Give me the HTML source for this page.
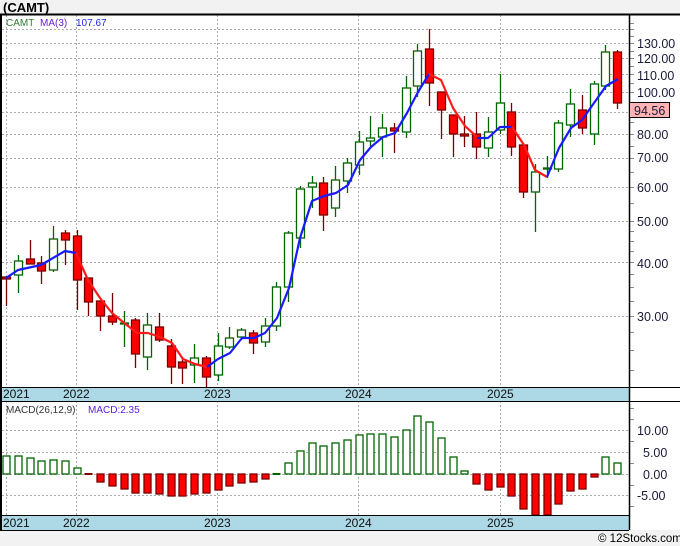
<!DOCTYPE html>
<html><head><meta charset="utf-8"><style>
html,body{margin:0;padding:0;background:#f2f2f2;width:680px;height:546px;overflow:hidden;font-family:"Liberation Sans","DejaVu Sans",sans-serif}
svg{position:absolute;left:0;top:0}
</style></head><body>
<svg id="s" width="680" height="546" xmlns="http://www.w3.org/2000/svg" font-family="Liberation Sans, DejaVu Sans, sans-serif">
<rect x="0" y="14" width="680" height="516" fill="#fff"/>
<g id="grid" stroke="#aaa" stroke-dasharray="2,2" stroke-width="1"></g>
<rect x="0" y="387" width="629" height="14" fill="#add8e6"/>
<rect x="0" y="516" width="629" height="14" fill="#add8e6"/>
<g id="ticks" stroke="#888"></g>
<g id="cd"></g>
<g id="ma" fill="none" stroke-width="2.2" stroke-linejoin="round"></g>
<g id="mb"></g>
<line x1="0" y1="14.5" x2="680" y2="14.5" stroke="#000" stroke-width="2"/>
<line x1="1" y1="14" x2="1" y2="530" stroke="#000" stroke-width="2"/>
<line x1="629.5" y1="14" x2="629.5" y2="530" stroke="#000" stroke-width="1.5"/>
<line x1="0" y1="387.5" x2="680" y2="387.5" stroke="#000"/>
<line x1="0" y1="401.5" x2="680" y2="401.5" stroke="#000"/>
<line x1="0" y1="515.5" x2="629" y2="515.5" stroke="#000"/>
<line x1="0" y1="530.5" x2="629" y2="530.5" stroke="#000"/>
<text x="3" y="12" font-size="13" font-weight="bold" fill="#000">(CAMT)</text>
<text x="6" y="26" font-size="10" fill="#2e7d32">CAMT</text>
<text x="40" y="26" font-size="10" fill="#6a1fd1">MA(3)</text>
<text x="76" y="26" font-size="10" fill="#1e2be0">107.67</text>
<text x="6" y="413" font-size="10" fill="#333">MACD(26,12,9)</text>
<text x="88" y="413" font-size="10" fill="#5a1fe0">MACD:2.35</text>
<g font-size="12" fill="#111">
<text x="3" y="398">2021</text><text x="63" y="398">2022</text><text x="204" y="398">2023</text><text x="345" y="398">2024</text><text x="487" y="398">2025</text>
<text x="3" y="527">2021</text><text x="63" y="527">2022</text><text x="204" y="527">2023</text><text x="345" y="527">2024</text><text x="487" y="527">2025</text>
</g>
<g font-size="12.5" fill="#1a1a3a">
<text x="637" y="48">130.00</text><text x="637" y="63">120.00</text><text x="637" y="80">110.00</text><text x="637" y="97">100.00</text>
<text x="637" y="139">80.00</text><text x="637" y="162">70.00</text><text x="637" y="192">60.00</text><text x="637" y="226">50.00</text>
<text x="637" y="268">40.00</text><text x="637" y="321">30.00</text>
<text x="637" y="435">10.00</text><text x="643" y="457">5.00</text><text x="643" y="479">0.00</text><text x="637" y="500">-5.00</text>
</g>
<rect x="629.5" y="102.5" width="40" height="15" fill="#ffb3b3" stroke="#000"/>
<text x="634" y="115" font-size="12.5" fill="#1a1a3a">94.56</text>
<text x="598" y="542" font-size="11.5" fill="#000">© 12Stocks.com</text>
</svg>
<script>
var NS="http://www.w3.org/2000/svg";
function el(p,t,a){var e=document.createElementNS(NS,t);for(var k in a)e.setAttribute(k,a[k]);document.getElementById(p).appendChild(e);return e;}
function Y(p){return 316-186*Math.log(p/30);}
[140,130,120,110,100,90,80,70,60,50,40,30].forEach(function(p){var y=Math.round(Y(p))+0.5;el("grid","line",{x1:2,y1:y,x2:629,y2:y});});
[430,452,474,495].forEach(function(y){el("grid","line",{x1:2,y1:y+.5,x2:629,y2:y+.5});});
[6,76,217,358,500].forEach(function(x){el("grid","line",{x1:x+.5,y1:15,x2:x+.5,y2:387});el("grid","line",{x1:x+.5,y1:401,x2:x+.5,y2:516});});
for(var p=20;p<50;p+=2.5){var y=Math.round(Y(p))+.5;if(y<387)el("ticks","line",{x1:630,y1:y,x2:634,y2:y});}
for(var p=50;p<=145;p+=5){var y=Math.round(Y(p))+.5;el("ticks","line",{x1:630,y1:y,x2:634,y2:y});}
[408,419,441,463,485,506].forEach(function(y){el("ticks","line",{x1:630,y1:y+.5,x2:634,y2:y+.5});});
var C=[[276,277,279,306,'r'],[255,261,275,293,'g'],[240,259,264,264,'r'],[256,263,271,284,'r'],[226,239,270,272,'g'],[230,233,240,265,'r'],[230,236,280,310,'r'],[278,278,302,316,'r'],[301,301,316,331,'r'],[293,316,322,325,'r'],[311,323,324,347,'g'],[318,320,354,368,'r'],[313,325,357,370,'g'],[313,327,340,342,'r'],[339,346,367,384,'r'],[358,362,368,384,'r'],[344,358,365,383,'g'],[356,358,377,388,'r'],[333,346,375,381,'g'],[327,338,347,349,'g'],[328,330,337,340,'g'],[330,333,343,354,'r'],[318,326,342,347,'g'],[282,287,326,331,'g'],[231,233,287,302,'g'],[186,189,238,248,'g'],[176,183,187,208,'g'],[177,183,215,231,'r'],[166,180,208,217,'g'],[158,163,181,193,'g'],[131,142,165,175,'g'],[116,138,141,147,'g'],[114,128,137,157,'g'],[123,128,131,153,'r'],[76,88,132,138,'g'],[44,51,86,97,'g'],[29,49,83,106,'r'],[92,92,110,139,'r'],[115,115,134,157,'r'],[116,134,136,147,'r'],[112,134,147,159,'r'],[117,132,148,157,'g'],[74,103,130,134,'g'],[103,112,147,156,'r'],[145,145,192,198,'r'],[164,172,192,232,'g'],[156,168,169,178,'g'],[120,123,169,172,'g'],[89,104,125,137,'g'],[95,110,128,134,'r'],[81,84,134,145,'g'],[45,52,86,90,'g'],[50,52,103,109,'r']];
C.forEach(function(c,i){var x=Math.round(6+11.75*i)+.5;var r=c[4]=='r';var sc=r?'#7a0000':'#006400';
el("cd","line",{x1:x,y1:c[0],x2:x,y2:c[3],stroke:sc,"stroke-width":1.3});
el("cd","rect",{x:x-4,y:c[1],width:8,height:Math.max(1,c[2]-c[1]),fill:r?'#ff0000':'#fff',stroke:sc,"stroke-width":1.3});});
var segs=[['#1a1aff',[[6,278],[18,270],[41,265],[65,251],[76,253]]],['#ff1a1a',[[76,253],[88,280],[100,298],[112,313],[123,322],[137,333],[148,333],[160,337],[172,343],[183,359],[195,364],[207,367]]],['#1a1aff',[[207,367],[218,359],[230,353],[242,338],[254,338],[265,333],[277,318],[289,288],[300,238],[312,201],[324,196],[336,193],[348,185],[360,160],[371,147],[383,137],[395,133],[407,113],[418,92],[429,74]]],['#ff1a1a',[[429,74],[441,80],[453,108],[465,126],[477,137]]],['#1a1aff',[[477,138],[488,138],[500,127],[512,127]]],['#ff1a1a',[[512,127],[524,145],[535,170],[547,177]]],['#1a1aff',[[547,177],[559,148],[571,128],[582,120],[594,103],[606,86],[618,79]]]];
segs.forEach(function(s){el("ma","polyline",{points:s[1].map(function(p){return p.join(',')}).join(' '),stroke:s[0]});});
var M=[456,456,458,461,460,461,468,475,482,486,489,493,493,494,496,496,494,493,490,486,483,482,479,474,463,451,443,446,443,440,435,434,434,437,430,416,422,438,457,471,484,490,487,496,509,515,515,504,491,489,477,457,463];
M.forEach(function(v,i){var x=Math.round(6+11.75*i)+.5;var g=v<=474;
if(Math.abs(v-474)<2){el("mb","rect",{x:x-4,y:473,width:8,height:2,fill:g?'#006400':'#7a0000'});return;}
if(g)el("mb","rect",{x:x-3.5,y:v,width:7,height:474-v,fill:'#fff',stroke:'#006400',"stroke-width":1.3});
else el("mb","rect",{x:x-3.5,y:474,width:7,height:v-474,fill:'#ff0000',stroke:'#7a0000',"stroke-width":1.3});});
</script>
</body></html>
